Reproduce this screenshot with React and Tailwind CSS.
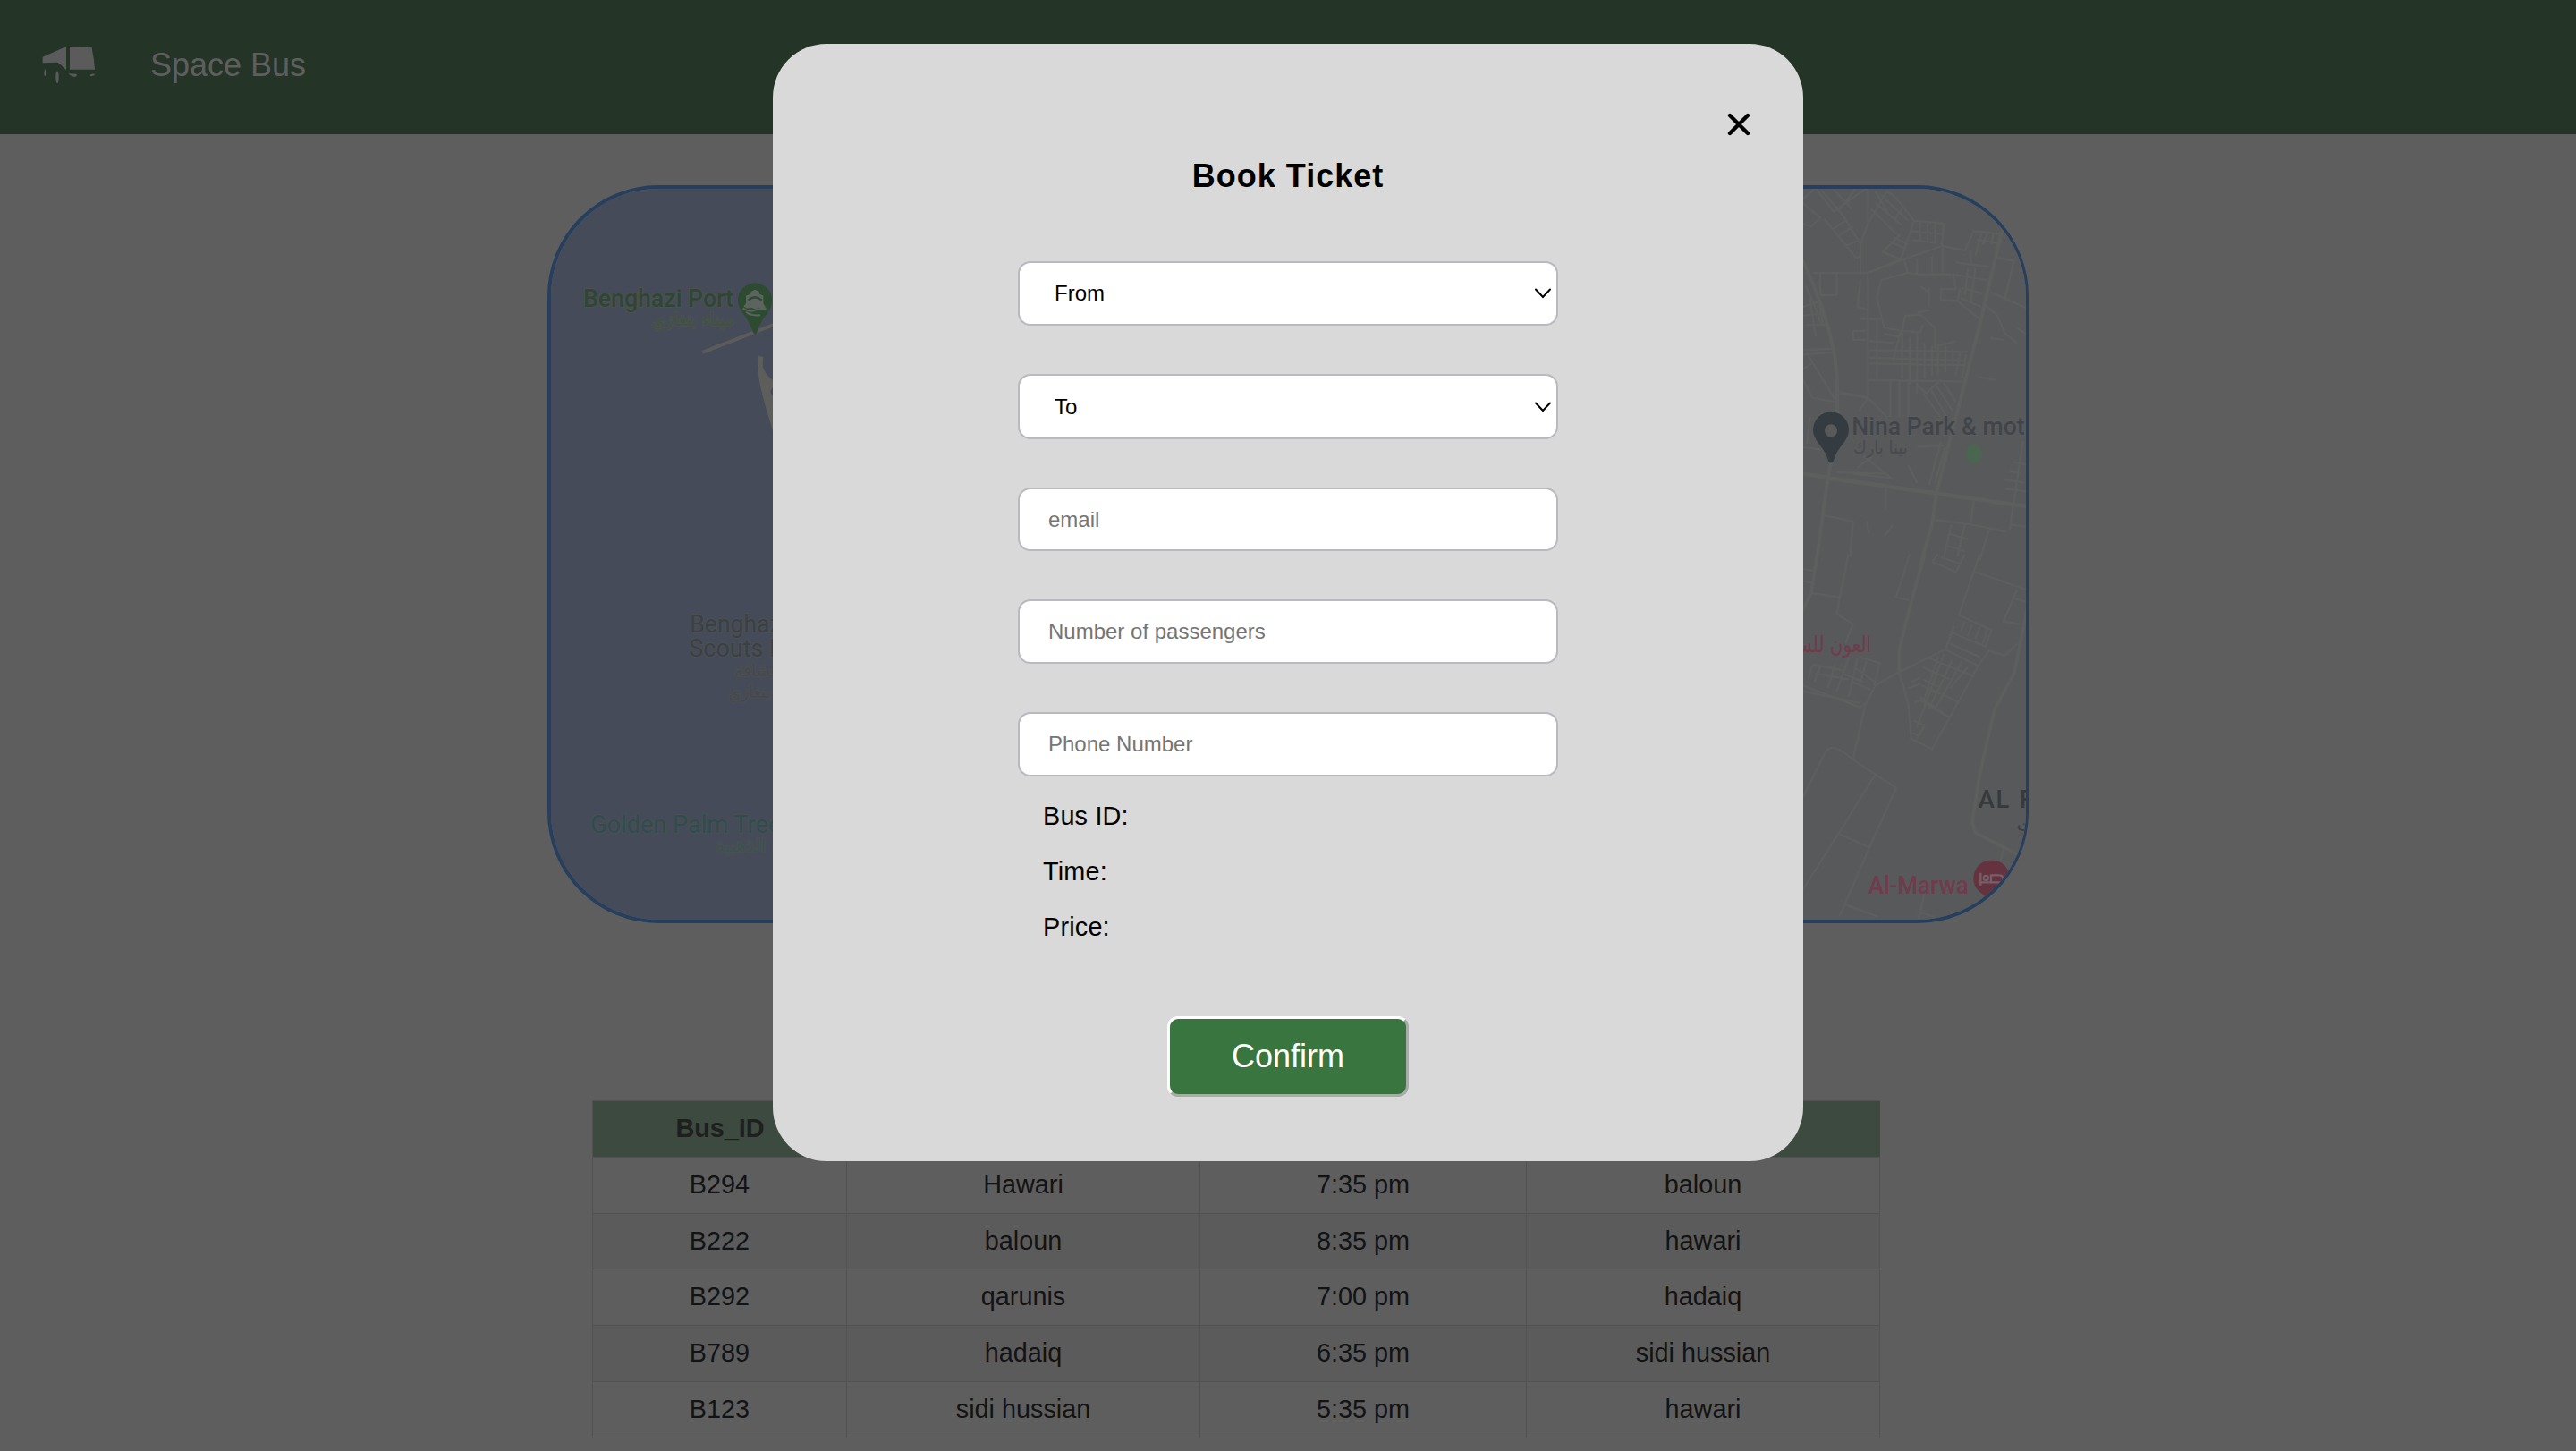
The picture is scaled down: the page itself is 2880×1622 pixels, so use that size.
const rows = [
  { h: 'h-[63px]', bg: 'bg-[#5e5e5e]', cells: ['B294', 'Hawari', '7:35 pm', 'baloun'] },
  { h: 'h-[62px]', bg: 'bg-[#5b5b5b]', cells: ['B222', 'baloun', '8:35 pm', 'hawari'] },
  { h: 'h-[63px]', bg: 'bg-[#5e5e5e]', cells: ['B292', 'qarunis', '7:00 pm', 'hadaiq'] },
  { h: 'h-[63px]', bg: 'bg-[#5b5b5b]', cells: ['B789', 'hadaiq', '6:35 pm', 'sidi hussian'] },
  { h: 'h-[63px]', bg: 'bg-[#5e5e5e]', cells: ['B123', 'sidi hussian', '5:35 pm', 'hawari'] },
];
const heads = ['Bus_ID', 'From', 'Time', 'To'];
const cols = 'grid grid-cols-[284px_395px_365px_395px]';

function BusLogo() {
  return (
    <svg className="mb-[4px] ml-[46px] h-[46px] w-[64px]" viewBox="0 0 192 138" fill="#5b5b5b">
      <path d="M5 50 84 15V93Q77 90 68 78Q62 70 54 68L5 70Z" />
      <path d="M96 15 126 16 128 18 170 18 172 32 177 60 180 92H96Z" />
      <path d="M14 89q4 12 0 26q-5 -1 -4 -14q1 -9 4 -12Z" />
      <path d="M54 96q5 3 5 24q-1 18 -5 20q-5 -6 -5 -22t5 -22Z" />
      <path d="M92 106l27 1l0 8q-8 3 -16 -1q-9 -3 -11 -8Z" />
      <path d="M164 110q8 -5 16 -3q-1 6 -15 8Z" />
    </svg>
  );
}

function CityMap() {
  return (
    <svg className="block h-full w-full" viewBox="616 211 1649 818" preserveAspectRatio="none">
      <rect x="612" y="207" width="700" height="825" fill="#454b59" />
      <rect x="1300" y="207" width="970" height="825" fill="#58595b" />
      <g transform="translate(600 190) scale(0.33333)">
        <g fontFamily="Roboto, sans-serif" fontSize="82" stroke="#4c5150" strokeWidth="8" strokeLinejoin="round" paintOrder="stroke">
          <text x="156" y="459" fill="#2f4637" fontWeight="500" textLength="504" lengthAdjust="spacingAndGlyphs">Benghazi Port</text>
          <text x="662" y="523" fill="#3f5243" fontSize="60" textAnchor="start" direction="rtl" fontFamily="DejaVu Sans, sans-serif" textLength="276" lengthAdjust="spacingAndGlyphs">ميناء بنغازي</text>
        </g>
        <path d="M556 612 800 518" stroke="#5a5b5a" strokeWidth="12" />
        <path d="M744 625 760 627 758 660 Q770 695 800 710V900Q748 740 743 680Z" fill="#5d5d5b" />
        <path d="M800 727Q780 735 786 750L800 770Z" fill="#454b59" />
        <path d="M732 380a57 57 0 0 1 57 57c0 39 -34 54 -50 108q-6 14 -13 0c-16 -54 -51 -69 -51 -108a57 57 0 0 1 57 -57Z" fill="#2c4b31" />
        <path d="M718 409l14 -7 15 7v8l13 5v26l8 12q-12 8 -22 2q-12 8 -26 0q-14 6 -26 -4l8 -10v-26l16 -5Z" fill="#5d6460" />
        <path d="M710 437q22 -20 45 0" stroke="#2c4b31" strokeWidth="7" fill="none" />
        <path d="M692 464q20 14 38 7t40 -5M702 477q18 14 48 10" stroke="#5d6460" strokeWidth="6" fill="none" />
      </g>
      <g transform="translate(600 620) scale(0.33333)" fontFamily="Roboto, sans-serif" fontSize="82" stroke="#4b4f53" strokeWidth="8" strokeLinejoin="round" paintOrder="stroke">
        <text x="514" y="264" fill="#3a4045" textLength="326" lengthAdjust="spacingAndGlyphs">Benghazi</text>
        <text x="511" y="345" fill="#3a4045" textLength="320" lengthAdjust="spacingAndGlyphs">Scouts B</text>
        <g fontSize="60" fontFamily="DejaVu Sans, sans-serif" direction="rtl">
          <text x="812" y="410" fill="#45494c" textLength="148" lengthAdjust="spacingAndGlyphs">كشافة</text>
          <text x="785" y="482" fill="#45494c" textLength="142" lengthAdjust="spacingAndGlyphs">بنغازي</text>
          <text x="820" y="1000" fill="#3b5250" textLength="222" lengthAdjust="spacingAndGlyphs">ة الذهبية</text>
        </g>
        <text x="180" y="936" fill="#2f4c50" textLength="640" lengthAdjust="spacingAndGlyphs">Golden Palm Tree</text>
      </g>
      <g transform="translate(2000 190) scale(0.33333)">
        <g fill="none" stroke="#5d5f5e" strokeWidth="7" strokeLinejoin="round">
          <path strokeWidth="12" d="M40 290Q150 520 162 700L162 820M714 205 640 520 560 830 495 1085 480 1190 440 1330" />
          <path strokeWidth="14" d="M40 1018 140 1035 490 1085 800 1130" />
          <path strokeWidth="12" d="M140 985 130 1040 90 1330" />
          <path d="M45 100 90 60 150 140 240 75 265 60V180L240 250V345M45 110 105 160 75 190 45 180M110 70 180 150 240 250M150 65 210 130M165 140 225 60M120 165 225 295 240 290M145 200 190 170M165 222 215 190M190 255 235 235" />
          <path d="M265 180 330 70 360 95 420 170 375 300 265 345M275 130 360 215M290 110 378 185M310 85 400 170M330 140 290 70M352 170 380 130M420 170 520 180 512 255M410 205 515 215M440 170V235M465 175V240M490 175V245M415 235 495 245M375 215 315 275 375 300M335 240 395 265M350 225 400 250" />
          <path d="M80 345H265M265 345V765L160 750M265 345 385 300 515 255 590 270 620 205 710 215M160 345V420H105M105 345V420M240 370 230 460 270 470M385 300 400 345 430 350V300M430 350H550L560 400 510 400 510 435 565 440 575 395M470 395V460M400 345 310 370 295 430 320 530 380 540 390 490 440 485 490 530V600M480 290V345M515 260V345M440 390 470 410M565 440 640 500M560 310 670 325M550 350 665 370M600 330 590 420M625 330 610 440M580 395 650 415M575 430 645 460M470 470 430 480M385 540 440 545 450 520" />
          <path d="M610 270V310M645 215 625 290M665 215 650 250M685 215 680 250M630 235 700 245M700 295 755 305 725 430M675 410 800 465M655 450 700 490 725 550 765 580M765 530 800 555M675 565 720 570M635 695 695 705" />
          <path d="M215 540H260M215 540V570H260M240 500H310M295 500V700M270 575 350 580M270 605 600 610M270 630 590 640M270 650 590 655M270 705 580 710M320 550 370 560M350 640 375 540M380 545V700M405 560V720M430 545V750M455 580V700M480 590V690M500 590V690M525 590V680M550 600V650M575 610 560 690M595 620 580 700M500 590 560 575M340 710V830M370 710V830M400 710V830M430 720 460 750 510 705M450 750 510 830M475 735 530 830M495 725 550 810M520 715 560 780" />
          <path d="M45 605 150 600M45 620 150 612M45 670 75 650M60 615 155 770M45 700 80 765 160 780M55 390 80 440 110 520M45 460 110 440M45 490 120 480M60 520H125M70 430 90 560M100 430 115 520M170 745 265 765 235 810M265 765 330 830M45 930 110 940M70 830 60 920M250 960 350 1040M230 1000 280 960M215 1020 350 1035M160 1015 330 1020M400 990 430 1050M430 930 520 925M510 910 470 1060M525 930 490 1050M785 910 740 1210M750 980 800 990M720 1040 790 1050M725 1070 800 1080M740 1010 780 1020M120 1160 215 1180 205 1300M325 1070V1140M490 1175 610 1190 730 1215M740 1190 800 1198M620 1110 610 1190M545 1190 520 1300M590 1190 565 1300M670 1210 640 1310M535 1220 600 1240M525 1260 590 1280M260 1180 270 1220M350 1190 320 1230" />
        </g>
        <ellipse cx="620" cy="953" rx="27" ry="33" fill="#4a6650" />
        <path fillRule="evenodd" d="M141 812a60 60 0 0 1 60 60c0 41 -41 58 -51 105q-9 12 -18 0c-10 -47 -51 -64 -51 -105a60 60 0 0 1 60 -60ZM141 854a21 21 0 1 0 .1 0Z" fill="#353c41" />
        <text x="211" y="888" fontFamily="Roboto, sans-serif" fontSize="82" fontWeight="500" fill="#41454a" stroke="#5b5c5e" strokeWidth="5" paintOrder="stroke" textLength="580" lengthAdjust="spacingAndGlyphs">Nina Park &amp; mot</text>
        <text x="398" y="953" fontFamily="DejaVu Sans, sans-serif" fontSize="60" fill="#484b4e" direction="rtl" textLength="182" lengthAdjust="spacingAndGlyphs">نينا بارك</text>
      </g>
      <g transform="translate(2000 620) scale(0.33333)">
        <g fill="none" stroke="#5d5f5e" strokeWidth="7" strokeLinejoin="round">
          <path strokeWidth="11" d="M95 0 75 130 45 190M455 0 400 200 370 320V395M800 180 755 400 690 520 640 740 615 900 625 935 800 1025" />
          <path d="M75 130 170 145M200 0 160 200 215 235 190 300M45 50 80 55M45 90 75 95M405 0 360 145 405 155M640 0 570 205 680 255 660 310 540 260M625 60 800 120M480 25 560 60 590 0M500 0 480 25M510 10 580 35M765 120 720 225 775 235M760 150 800 160M590 225 575 260M615 235 600 275M640 245 625 285M665 250 650 300M555 240 525 320 370 395 290 440 255 510 215 690 360 785 270 985 170 1215M540 300 640 345M525 320 635 375 670 325 725 340 765 300M635 375 480 655 410 620 400 500 370 395M520 335 430 580M460 345 620 410M450 380 540 420M500 345 450 500M550 350 470 520M580 360 490 520M600 380 540 450M480 455 565 495M440 480 540 550M420 500 440 490 540 550M410 430 440 415M400 450 440 435M420 560 455 575 430 620M410 600 440 610M450 420 510 450M445 440 500 470" />
          <path d="M45 440 240 515 255 500M45 460 240 500M80 370 65 420M105 375 85 430M80 370 180 390M90 400 200 420M155 370 130 450M200 350 160 460M230 350 200 480M220 380 290 430M235 345 305 365 285 440M215 430 275 455M180 400 250 430M260 360 240 430M45 820 125 660Q150 630 215 690M290 740 165 940 45 1130M170 940 270 985M185 1175 300 1218M455 1140 435 1225M430 1200 490 1218M720 985 710 1030" />
        </g>
        <g fontFamily="Roboto, sans-serif" fontSize="82">
          <text x="276" y="328" fontFamily="DejaVu Sans, sans-serif" fontSize="74" fill="#703b4c" direction="rtl" textLength="285" lengthAdjust="spacingAndGlyphs">العون للسيا</text>
          <text x="635" y="852" fontWeight="500" fill="#363a3b" letterSpacing="5">AL</text>
          <text x="774" y="852" fontWeight="500" fill="#363a3b">F</text>
          <text x="794" y="930" fontFamily="DejaVu Sans, sans-serif" fontSize="66" fill="#3d4142" textAnchor="middle">ت</text>
          <text x="266" y="1139" fontWeight="500" fill="#703b4c" textLength="336" lengthAdjust="spacingAndGlyphs">Al-Marwa</text>
        </g>
        <circle cx="680" cy="1088" r="61" fill="#64333f" />
        <path d="M630 1115 680 1180 740 1115Z" fill="#64333f" />
        <path d="M643 1070V1112M643 1102H718M718 1112V1090Q718 1078 706 1078H678V1100" stroke="#756067" strokeWidth="7" fill="none" />
        <circle cx="661" cy="1087" r="8" fill="none" stroke="#756067" strokeWidth="6" />
      </g>
    </svg>
  );
}

const field =
  'flex w-[604px] items-center rounded-[14px] border-2 border-[#b9b9c0] bg-white text-[24px] leading-none';

function SelectField({ label, size }) {
  return (
    <div className={`${field} ${size} justify-between pr-[6px] pl-[39px] text-black`}>
      <span>{label}</span>
      <svg className="h-[12px] w-[18px]" viewBox="0 0 18 12" fill="none" stroke="#000" strokeWidth="2">
        <path d="M1 1.5 9 10 17 1.5" strokeLinecap="round" />
      </svg>
    </div>
  );
}

function TextField({ label, size }) {
  return <div className={`${field} ${size} pl-[32px] text-[#757575]`}>{label}</div>;
}

export default function App() {
  return (
    <div className="h-[1622px] w-[2880px] overflow-hidden bg-[#5e5e5e] font-['Liberation_Sans',Arial,sans-serif]">
      <header className="flex h-[150px] items-center bg-[#243427] pb-[7px]">
        <BusLogo />
        <span className="ml-[58px] pt-[2px] text-[36px] leading-[42px] text-[#5e5e5e]">Space Bus</span>
      </header>

      <div className="mt-[57px] ml-[612px] h-[825px] w-[1656px] overflow-hidden rounded-[124px] border-4 border-r-[3px] border-[#263f5e]">
        <CityMap />
      </div>

      <div className="mt-[198px] ml-[662px] w-[1440px] border-t border-l border-[#525252] text-[28.8px] leading-[34px] text-[#131313]">
        <div className={`${cols} h-[63px] border-b border-[#525252] bg-[#3d4a40] font-bold text-[#1f1f1f]`}>
          {heads.map((h) => (
            <div key={h} className="flex items-center justify-center pb-[2px]">{h}</div>
          ))}
        </div>
        {rows.map((r) => (
          <div key={r.cells[0]} className={`${cols} ${r.h} ${r.bg} border-b border-[#525252]`}>
            {r.cells.map((c) => (
              <div key={c} className="flex items-center justify-center border-r border-[#525252] pb-[2px]">{c}</div>
            ))}
          </div>
        ))}
      </div>

      <div className="fixed inset-0 flex items-start justify-center pt-[49px]">
        <div className="flex h-[1249px] w-[1152px] flex-col items-center rounded-[60px] bg-[#d9d9d9] text-black">
          <div className="flex w-full justify-end pt-[77px] pr-[59px]">
            <svg className="h-[26px] w-[26px]" viewBox="0 0 26 26" stroke="#000" strokeWidth="4.4" strokeLinecap="round">
              <path d="M3 3 23 23M23 3 3 23" />
            </svg>
          </div>
          <h2 className="mt-[24px] h-[42px] text-[36px] leading-[42px] font-bold tracking-[1px]">Book Ticket</h2>
          <div className="mt-[74px] flex flex-col gap-[54px]">
            <SelectField label="From" size="h-[72px]" />
            <SelectField label="To" size="h-[73px]" />
            <TextField label="email" size="h-[71px]" />
            <TextField label="Number of passengers" size="h-[72px]" />
            <TextField label="Phone Number" size="h-[72px]" />
          </div>
          <div className="mt-[27px] flex w-[604px] flex-col gap-[28px] pl-[28px] text-[28.8px] leading-[34px] tracking-[0.2px]">
            <p>Bus ID:</p>
            <p>Time:</p>
            <p>Price:</p>
          </div>
          <button className="mt-[83px] h-[90px] w-[270px] rounded-[12px] border-[3px] border-t-white border-r-[#aaaaaa] border-b-[#aaaaaa] border-l-white bg-[#39753f] text-[36px] leading-[42px] text-white">
            Confirm
          </button>
        </div>
      </div>
    </div>
  );
}
